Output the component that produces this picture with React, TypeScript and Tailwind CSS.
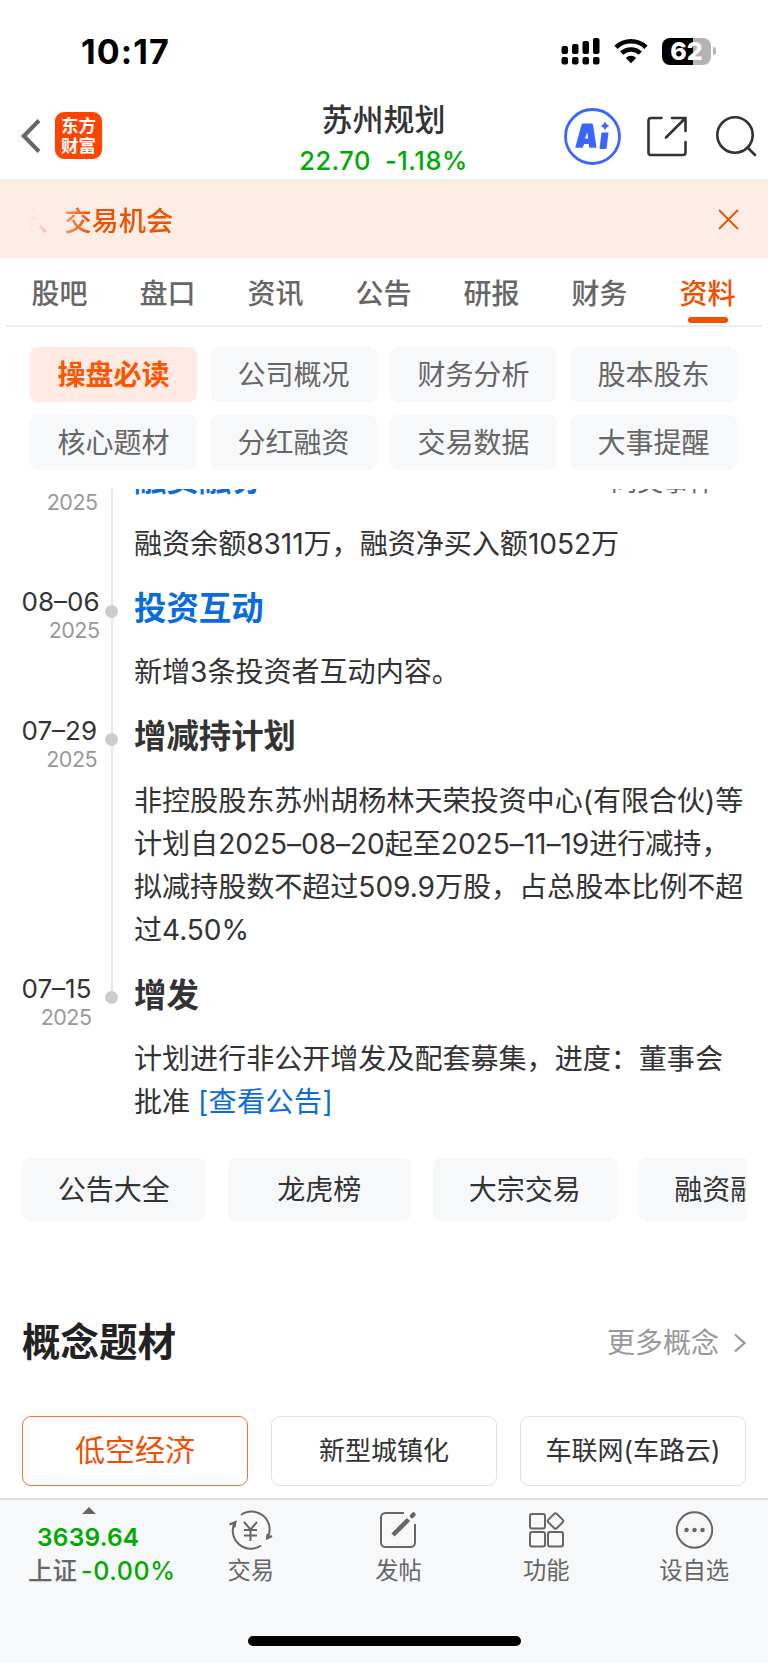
import type { ReactNode } from "react";

const tabs = ["股吧", "盘口", "资讯", "公告", "研报", "财务", "资料"];
const chips = ["操盘必读", "公司概况", "财务分析", "股本股东", "核心题材", "分红融资", "交易数据", "大事提醒"];
const shortcuts = ["公告大全", "龙虎榜", "大宗交易", "融资融券"];

export default function App() {
  return (
    <div className="flex h-[1663px] w-[768px] flex-col overflow-hidden bg-white font-['Inter','Noto_Sans_CJK_SC',sans-serif] text-[#333]">
      <StatusBar />
      <Header />
      <Banner />

      {/* Main tabs */}
      <nav className="mx-1.5 flex h-[69px] shrink-0 border-b-2 border-[#ededef]">
        {tabs.map((tab) => (
          <Tab key={tab} label={tab} active={tab === "资料"} />
        ))}
      </nav>

      {/* Sub navigation */}
      <div className="grid shrink-0 grid-cols-4 gap-[13px] pt-5 pr-[31px] pl-[30px]">
        {chips.map((chip, i) => (
          <button
            key={chip}
            className={
              i === 0
                ? "h-[55px] rounded-lg bg-[#ffebe4] text-[28px] leading-[52px] font-bold text-[#ff5500]"
                : "h-[55px] rounded-lg bg-[#f7f8fa] text-[28px] leading-[52px] text-[#666]"
            }
          >
            {chip}
          </button>
        ))}
      </div>

      <Timeline />

      {/* Shortcuts, scrolls sideways */}
      <div className="mx-[22px] mt-[35px] flex shrink-0 gap-[22px] overflow-hidden">
        {shortcuts.map((s) => (
          <button
            key={s}
            className="h-[63px] w-[183.5px] shrink-0 rounded-lg bg-[#f7f8fa] text-[28px] leading-[60px]"
          >
            {s}
          </button>
        ))}
      </div>

      <div className="mt-[92px] flex h-[60px] shrink-0 items-center justify-between px-[22px]">
        <h2 className="text-[38.5px] font-bold text-[#222]">概念题材</h2>
        <a className="flex items-center gap-[15px] text-[28px] text-[#999]">
          更多概念
          <svg width="12" height="20" viewBox="0 0 12 20" fill="none" stroke="#999" strokeWidth="2.2">
            <path d="M1 1.5 10.5 10 1 18.5" />
          </svg>
        </a>
      </div>

      <div className="mt-[43px] grid h-[70px] shrink-0 grid-cols-3 gap-[23px] px-[22px]">
        <button className="rounded-[9px] border border-[#f4713a] pb-[2px] text-[30px] text-[#f05000]">低空经济</button>
        <button className="rounded-[9px] border border-[#dfe0e6] pb-[2px] text-[26px]">新型城镇化</button>
        <button className="rounded-[9px] border border-[#dfe0e6] pb-[2px] text-[26px]">车联网(车路云)</button>
      </div>

      <BottomBar />
    </div>
  );
}

function StatusBar() {
  return (
    <div className="flex h-[102px] shrink-0 items-center justify-between pr-[52px] pl-[81px]">
      <span className="pt-px text-[34px] leading-none font-bold tracking-[1.1px] text-black">10:17</span>
      <div className="flex items-center">
        <svg width="40" height="28" viewBox="0 0 40 28">
          <rect x="0.5" y="9" width="6.5" height="8" rx="2" />
          <rect x="11" y="7" width="6.5" height="10" rx="2" />
          <rect x="21.5" y="4" width="6.5" height="13" rx="2" />
          <rect x="32" y="1" width="6.5" height="16" rx="2" />
          <rect x="0.5" y="20" width="6.5" height="7.5" rx="2" />
          <rect x="11" y="20" width="6.5" height="7.5" rx="2" />
          <rect x="21.5" y="20" width="6.5" height="7.5" rx="2" />
          <rect x="32" y="20" width="6.5" height="7.5" rx="2" />
        </svg>
        <svg className="ml-[13px]" width="34" height="26" viewBox="0 0 34 26" fill="none" stroke="#000" strokeWidth="4.6">
          <path d="M2 9.3a21.8 21.8 0 0 1 30 0" />
          <path d="M7.7 15.2a13.4 13.4 0 0 1 18.6 0" />
          <path d="M17 25.2l-5.2-5.3a7.5 7.5 0 0 1 10.4 0z" fill="#000" stroke="none" />
        </svg>
        <div className="ml-[14px] flex h-[27px] w-[49px] items-center justify-center rounded-lg bg-linear-to-r from-black from-[63%] to-[#b3b3b3] to-[63%] text-[25px] leading-none font-extrabold text-white">
          62
        </div>
        <span className="ml-[2px] h-2 w-[3px] rounded-r-full bg-[#b3b3b3]" />
      </div>
    </div>
  );
}

function Header() {
  return (
    <header className="flex h-[79px] shrink-0 border-b-2 border-[#ededef]">
      <div className="flex w-[260px] items-start pt-2.5 pl-[21px]">
        <svg className="mt-[7px]" width="20" height="34" viewBox="0 0 20 34" fill="none" stroke="#666" strokeWidth="4">
          <path d="M18 1.5 2.8 17 18 32.5" />
        </svg>
        <div className="ml-[14px] flex h-[47px] w-[47px] flex-col items-center justify-center rounded-[9px] bg-[#ff4400] text-[17.5px] leading-[20px] font-bold text-white">
          <span>东方</span>
          <span>财富</span>
        </div>
      </div>
      <div className="flex w-[247px] flex-col items-center">
        <h1 className="text-[31px] leading-[36px] font-medium">苏州规划</h1>
        <p className="flex gap-[14px] pt-px text-[25.5px] leading-[44px] font-medium tracking-[0.5px] whitespace-nowrap text-[#0a0]">
          <span>22.70</span>
          <span>-1.18%</span>
        </p>
      </div>
      <div className="flex flex-1 items-start pt-[5.5px] pl-[57px]">
        <svg width="57" height="57" viewBox="0 0 57 57">
          <circle cx="28.5" cy="28.5" r="27" fill="none" stroke="#3a66ff" strokeWidth="2.8" />
          <path
            d="M19 15.5h8.2c1 0 1.6.4 1.8 1.300l3.600 22.900h-7.200l-.6-3.800h-4.600l-1.500 3.800h-7.500l6.300-22.900c.3-.9.800-1.300 1.500-1.300zm4.300 9-2.300 6h3.200zM37.500 24.500h7l-1.800 15.200c-.1.900-.6 1.300-1.500 1.300h-5.700z"
            fill="#3a66ff"
          />
          <path d="M41 13.500q1 3.500 4.200 4.400-3.200 1-4.200 4.300-1-3.300-4.200-4.300 3.200-.9 4.200-4.400z" fill="#3a66ff" />
        </svg>
        <svg className="mt-2 ml-[26px]" width="40" height="41" viewBox="0 0 40 41" fill="none" stroke="#333" strokeWidth="2.6" strokeLinecap="round">
          <path d="M14.5 2H4a2.500 2.500 0 0 0-2.500 2.500v32A2.500 2.500 0 0 0 4 39h32a2.500 2.500 0 0 0 2.500-2.500V26M25 2h13.500v13M38 2.500 19 21.500" />
        </svg>
        <svg className="mt-[7px] ml-[28px]" width="42" height="42" viewBox="0 0 42 42" fill="none" stroke="#333" strokeWidth="2.6" strokeLinecap="round">
          <circle cx="20" cy="20" r="17.700" />
          <path d="M32.500 32.500 40 40" />
        </svg>
      </div>
    </header>
  );
}

function Banner() {
  return (
    <div className="flex h-[77px] shrink-0 items-center justify-between bg-[#fdede5] pr-[29px] pl-[30px]">
      <div className="flex h-[70px] w-[200px] items-center overflow-hidden pt-[5px] mask-[linear-gradient(to_right,transparent,black_60px)]">
        <span className="-ml-5 text-[27.2px] font-medium whitespace-nowrap text-[#f05000]">析、交易机会</span>
      </div>
      <svg className="mb-px" width="21" height="21" viewBox="0 0 21 21" stroke="#f05000" strokeWidth="1.8">
        <path d="M1 1l19 19M20 1 1 20" />
      </svg>
    </div>
  );
}

function Tab({ label, active }: { label: string; active: boolean }) {
  return (
    <button
      className={
        active
          ? "flex flex-1 flex-col items-center pr-px text-[28px] font-medium text-[#f05000]"
          : "flex flex-1 flex-col items-center pr-px text-[28px] font-medium text-[#666]"
      }
    >
      <span className="mt-[15px] leading-[42px]">{label}</span>
      {active && <span className="mt-[2px] h-1.5 w-10 rounded-full bg-[#f05000]" />}
    </button>
  );
}

function Timeline() {
  return (
    <section className="mt-[19px] flex h-[634px] shrink-0 flex-col overflow-hidden">
      <div className="-mt-[31.5px] flex shrink-0 flex-col">
        <Event date="08–07" title="融资融券" link extra="同类事件">
          融资余额8311万，融资净买入额1052万
        </Event>
        <Event date="08–06" title="投资互动" link>
          新增3条投资者互动内容。
        </Event>
        <Event date="07–29" title="增减持计划">
          非控股股东苏州胡杨林天荣投资中心(有限合伙)等
          <br />
          计划自2025–08–20起至2025–11–19进行减持，
          <br />
          拟减持股数不超过509.9万股，占总股本比例不超
          <br />
          过4.50%
        </Event>
        <Event date="07–15" title="增发" last>
          计划进行非公开增发及配套募集，进度：董事会
          <br />
          批准 <a className="tracking-[0.4px] text-[#0a6cdc]">[查看公告]</a>
        </Event>
      </div>
    </section>
  );
}

function Event({
  date,
  title,
  link,
  extra,
  last,
  children,
}: {
  date: string;
  title: string;
  link?: boolean;
  extra?: string;
  last?: boolean;
  children: ReactNode;
}) {
  return (
    <div className="flex">
      <div className="flex w-[104px] pl-[21.5px]">
        <div className="flex flex-col items-end">
          <span className="text-[26px] leading-[31px]">{date}</span>
          <span className="text-[21.5px] leading-[26px] tracking-[-0.5px] text-[#999]">2025</span>
        </div>
      </div>
      {/* Rail */}
      <div className="flex w-[15px] flex-col items-center">
        <span className="h-[18.5px] w-[2px] bg-[#e8e8e8]" />
        <span className="h-[13px] w-[13px] rounded-full bg-[#ccc]" />
        {!last && <span className="w-[2px] flex-1 bg-[#e8e8e8]" />}
      </div>
      <div className="flex-1 pr-[22px] pb-[20.4px] pl-[15px]">
        <div className="flex h-[44px] items-center justify-between pt-[2px]">
          <h3 className={link ? "text-[32.4px] font-bold text-[#0a6cdc]" : "text-[32.4px] font-bold"}>{title}</h3>
          {extra && <span className="mt-[2px] mr-[31px] text-[26px] text-[#666]">{extra}</span>}
        </div>
        <p className="mt-[21px] text-[28.1px] leading-[43.2px] tracking-[-0.05px] whitespace-nowrap">{children}</p>
      </div>
    </div>
  );
}

function BottomBar() {
  return (
    <footer className="mt-3 flex flex-1 flex-col border-t-2 border-[#dcdee2] bg-[#f7f8fa] text-[#666]">
      <div className="flex h-[100px]">
        <div className="flex w-[177px] flex-col pt-[7px] pl-7">
          <svg className="ml-[54px]" width="14" height="7" viewBox="0 0 14 7" fill="#666">
            <path d="M0 7 7 0l7 7z" />
          </svg>
          <span className="mt-[6px] pl-[9px] text-[24.5px] leading-[34px] font-semibold tracking-[0.2px] text-[#0a0]">
            3639.64
          </span>
          <span className="text-[24.5px] leading-[35px] font-medium whitespace-nowrap">
            上证<span className="pl-1 text-[25px] tracking-[0.6px] text-[#0a0]">-0.00%</span>
          </span>
        </div>
        <NavItem label="交易">
          <path d="M12 5a18 18 0 0 1 27 22M32 35.500A18 18 0 0 1 6 12M.5 14.500l6-2.500-1 5.500M43 26l-5 2.500.5-4.500" />
          <path d="M15 12l6.500 7.500L28 12M21.500 19.500V31M15 20h13M15 25.500h13" />
        </NavItem>
        <NavItem label="发帖">
          <path d="M27 3H8.500A4.500 4.500 0 0 0 4 7.500v25A4.500 4.500 0 0 0 8.500 37h25a4.500 4.500 0 0 0 4.500-4.500V14" />
          <path d="M16 25 31.500 9.500" strokeWidth="4.500" />
          <path d="M35 6l1.500-1.500" strokeWidth="4.500" strokeLinecap="round" />
        </NavItem>
        <NavItem label="功能">
          <rect x="5" y="4" width="15" height="14.500" rx="2" />
          <rect x="5" y="22" width="15" height="14.500" rx="2" />
          <rect x="23" y="22" width="15" height="14.500" rx="2" />
          <rect x="24.500" y="5" width="12" height="12" rx="2" transform="rotate(45 30.500 11)" />
        </NavItem>
        <NavItem label="设自选">
          <circle cx="21.500" cy="20" r="17.700" />
          <path d="M13.500 20h.01M21.500 20h.01M29.500 20h.01" strokeWidth="4.500" strokeLinecap="round" />
        </NavItem>
      </div>
      <div className="mx-auto mt-9 h-[10px] w-[273px] rounded-full bg-black" />
    </footer>
  );
}

function NavItem({ label, children }: { label: string; children: ReactNode }) {
  return (
    <button className="flex flex-1 flex-col items-center pt-[10px]">
      <svg width="43" height="40" viewBox="0 0 43 40" fill="none" stroke="#666" strokeWidth="2" className="overflow-visible">
        {children}
      </svg>
      <span className="mt-1 text-[23.3px] leading-[34px]">{label}</span>
    </button>
  );
}
